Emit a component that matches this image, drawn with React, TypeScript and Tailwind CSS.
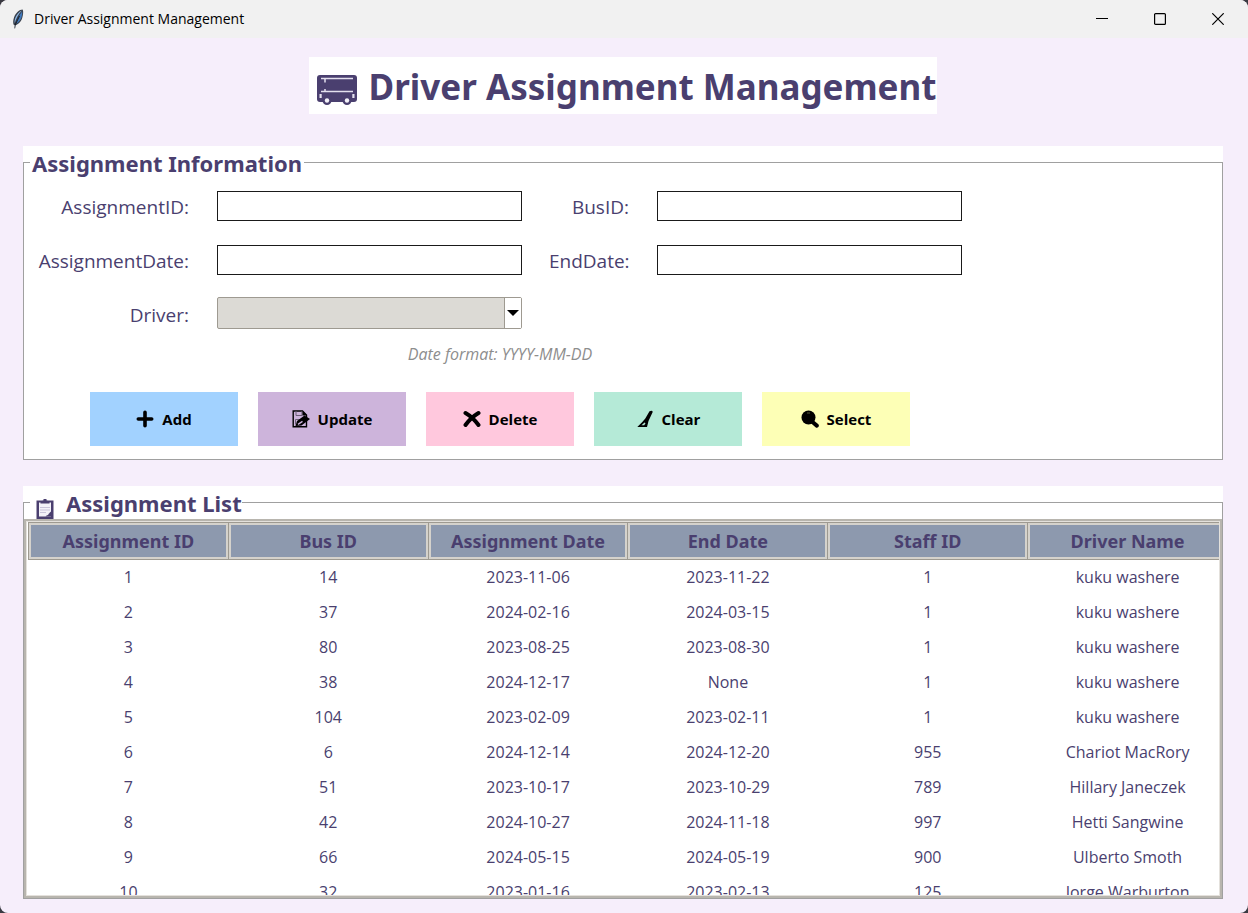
import type { ReactNode } from "react";

type Assignment = {
  id: number;
  bus: number;
  start: string;
  end: string;
  staff: number;
  driver: string;
};

const assignments: Assignment[] = [
  { id: 1, bus: 14, start: "2023-11-06", end: "2023-11-22", staff: 1, driver: "kuku washere" },
  { id: 2, bus: 37, start: "2024-02-16", end: "2024-03-15", staff: 1, driver: "kuku washere" },
  { id: 3, bus: 80, start: "2023-08-25", end: "2023-08-30", staff: 1, driver: "kuku washere" },
  { id: 4, bus: 38, start: "2024-12-17", end: "None", staff: 1, driver: "kuku washere" },
  { id: 5, bus: 104, start: "2023-02-09", end: "2023-02-11", staff: 1, driver: "kuku washere" },
  { id: 6, bus: 6, start: "2024-12-14", end: "2024-12-20", staff: 955, driver: "Chariot MacRory" },
  { id: 7, bus: 51, start: "2023-10-17", end: "2023-10-29", staff: 789, driver: "Hillary Janeczek" },
  { id: 8, bus: 42, start: "2024-10-27", end: "2024-11-18", staff: 997, driver: "Hetti Sangwine" },
  { id: 9, bus: 66, start: "2024-05-15", end: "2024-05-19", staff: 900, driver: "Ulberto Smoth" },
  { id: 10, bus: 32, start: "2023-01-16", end: "2023-02-13", staff: 125, driver: "Jorge Warburton" },
];

const columns = ["Assignment ID", "Bus ID", "Assignment Date", "End Date", "Staff ID", "Driver Name"];

function FeatherIcon() {
  return (
    <svg className="h-5 w-3" viewBox="0 0 12 20" aria-hidden="true">
      <path d="M10.6.6C7.5.6 3.6 4 2 8.400c-1 2.600-1 5-.5 7l1.100.8-.3 3.200.9-.1.6-3C7.500 14.600 9.500 12 10.300 8.800 11.200 5.500 11.600 2.500 10.600.6Z" fill="#39414d" />
      <path d="M9.900 1.600C7 3 4.200 6 3.100 9.500c-.5 1.700-.7 3.300-.4 4.800C4 10 6 5.500 9.900 1.600Z" fill="#8db8e6" />
      <path d="M10.100 2.400C7.400 6 5 10.300 4.200 15 6.700 13 8.700 11 9.400 8.400 10 6.200 10.400 4.200 10.100 2.400Z" fill="#3f79bd" />
      <path d="M7.500 7 3.200 16" stroke="#14181f" strokeWidth=".9" />
    </svg>
  );
}

function BusIcon() {
  return (
    <svg className="h-[30px] w-10" viewBox="0 0 40 30" aria-hidden="true">
      <path d="M3 0h34q3 0 3 3v21q0 3-3 3H3q-3 0-3-3V3q0-3 3-3Z" fill="#4a3f6f" />
      <path d="M4 3.500h32M8 3.500v4M8 14v3M4 16.500h32" fill="none" stroke="#e4e0ee" strokeWidth="1.500" />
      <circle cx="10" cy="25.500" r="4.500" fill="#4a3f6f" />
      <circle cx="30" cy="25.500" r="4.500" fill="#4a3f6f" />
      <circle cx="10" cy="25.500" r="2.200" fill="#f4f2f9" />
      <circle cx="30" cy="25.500" r="2.200" fill="#f4f2f9" />
      <path d="M2.500 19v4h2.200v-4ZM35.300 19v4h2.200v-4Z" fill="#e4e0ee" />
    </svg>
  );
}

function ClipboardIcon() {
  return (
    <svg className="h-5 w-[18px]" viewBox="0 0 18 20" aria-hidden="true">
      <path d="M.5 1.500h17V20H.5Z" fill="#4a3f6f" />
      <path d="M3 3.500h12V17.500H3Z" fill="#f3f1f8" />
      <path d="M4.500 2.500 7.500 1.500V0h3v1.500l3 1v2h-9Z" fill="#4a3f6f" />
      <path d="M4 8.500h10M4 11h10M4 13.500h6" stroke="#c9c4da" strokeWidth="1.200" />
      <path d="M9.500 17.500 15 12.500v5Z" fill="#4a3f6f" />
      <path d="M11 16.500V14.500h2.500Z" fill="#f3f1f8" />
    </svg>
  );
}

function PlusIcon() {
  return (
    <svg className="h-[18px] w-[18px]" viewBox="0 0 18 18" aria-hidden="true">
      <path d="M9 2.300v13.400M2.300 9h13.400" stroke="#000" strokeWidth="3.600" strokeLinecap="round" />
    </svg>
  );
}

function SaveEditIcon() {
  return (
    <svg className="h-[18px] w-[18px]" viewBox="0 0 18 18" aria-hidden="true">
      <path d="M1.200 1h9.300l4 4v11.800H1.200Z" fill="none" stroke="#000" strokeWidth="1.400" />
      <path d="M4 1v4.500h6V1M3.500 14.500v-5H8" fill="none" stroke="#6b5f76" strokeWidth="1" />
      <path d="M10.500 1v4.500h4.500Z" fill="#000" />
      <path d="m3.500 16 1.500-5 7.500-5.500 5.500 3.500-8.500 6.500Z" fill="#000" />
      <path d="m6 14.300 4.500-3" stroke="#cdb4db" strokeWidth="1.400" />
    </svg>
  );
}

function CrossIcon() {
  return (
    <svg className="h-[18px] w-[18px]" viewBox="0 0 18 18" aria-hidden="true">
      <path d="M2.500 3q7 4 13 12M15.500 3Q8 7.500 2.500 15" fill="none" stroke="#000" strokeWidth="4" strokeLinecap="round" />
    </svg>
  );
}

function BrushIcon() {
  return (
    <svg className="h-[18px] w-[18px]" viewBox="0 0 18 18" aria-hidden="true">
      <path d="M13.500 1.300q3-1.300 3.200.8L12.500 11l-1.500 6H1.300l5-5 3-3.500Z" fill="#000" />
      <path d="m5.500 15.300 3-2.800 1 .8-1.300 2Z" fill="#b5ead7" />
    </svg>
  );
}

function MagnifierIcon() {
  return (
    <svg className="h-[18px] w-[18px]" viewBox="0 0 18 18" aria-hidden="true">
      <circle cx="7.500" cy="7.500" r="7" fill="#000" />
      <path d="m11.500 12 4.300 3.600" stroke="#000" strokeWidth="4" strokeLinecap="round" />
      <path d="M6 3h3" stroke="#55563a" strokeWidth="1" />
    </svg>
  );
}

const actions: { label: string; color: string; icon: ReactNode }[] = [
  { label: "Add", color: "bg-[#a2d2ff]", icon: <PlusIcon /> },
  { label: "Update", color: "bg-[#cdb4db]", icon: <SaveEditIcon /> },
  { label: "Delete", color: "bg-[#ffc8dd]", icon: <CrossIcon /> },
  { label: "Clear", color: "bg-[#b5ead7]", icon: <BrushIcon /> },
  { label: "Select", color: "bg-[#fdffb6]", icon: <MagnifierIcon /> },
];

function TitleBar() {
  return (
    <header className="flex h-[38px] shrink-0 items-center bg-[#f1f1f1] pl-3">
      <FeatherIcon />
      <span className="ml-2.5 grow text-sm text-black">Driver Assignment Management</span>
      <div className="flex gap-3 pr-[7px]">
        <button type="button" aria-label="Minimize" className="flex h-[38px] w-[46px] items-center justify-center">
          <svg className="h-3 w-3" viewBox="0 0 12 12">
            <path d="M0 5.500h12" stroke="#000" />
          </svg>
        </button>
        <button type="button" aria-label="Maximize" className="flex h-[38px] w-[46px] items-center justify-center">
          <svg className="h-3 w-3" viewBox="0 0 12 12">
            <rect x=".6" y=".6" width="10.800" height="10.800" rx="1" fill="none" stroke="#000" strokeWidth="1.200" />
          </svg>
        </button>
        <button type="button" aria-label="Close" className="flex h-[38px] w-[46px] items-center justify-center">
          <svg className="h-3 w-3" viewBox="0 0 12 12">
            <path d="m.3.3 11.400 11.400M11.700.3.3 11.700" stroke="#000" strokeWidth="1.200" />
          </svg>
        </button>
      </div>
    </header>
  );
}

function Field({ id, label }: { id: string; label: string }) {
  return (
    <>
      <label htmlFor={id} className="pt-0.5 pr-px text-right text-[19px] leading-7">
        {label}
      </label>
      <input id={id} type="text" className="h-[30px] w-full border border-[#1a1a1a] bg-white px-1 text-base" />
    </>
  );
}

function AssignmentForm() {
  return (
    <section aria-labelledby="form-title" className="shrink-0 bg-white pt-4">
      <div className="border border-[#a0a0a0] pb-[13px]">
        <h2 id="form-title" className="-mt-4 ml-1.5 w-fit bg-white px-0.5 font-['Noto_Sans',sans-serif] text-[22px] leading-8 font-bold">
          Assignment Information
        </h2>
        <form className="mt-3 ml-3.5 w-[924px]">
          <div className="grid grid-cols-[152px_305px_81px_305px] items-center gap-x-[27px] gap-y-6">
            <Field id="assignment-id" label="AssignmentID:" />
            <Field id="bus-id" label="BusID:" />
            <Field id="assignment-date" label="AssignmentDate:" />
            <Field id="end-date" label="EndDate:" />
            <label htmlFor="driver" className="pt-0.5 pr-px text-right text-[19px] leading-7">
              Driver:
            </label>
            <div className="relative -mt-0.5">
              <select
                id="driver"
                className="block h-8 w-full appearance-none rounded-xs border border-[#9e9a91] bg-[#dcdad5] px-1 text-base"
              />
              <span className="pointer-events-none absolute inset-y-px right-px flex w-[17px] items-center justify-center border-l border-[#9e9a91] bg-white">
                <svg className="h-1.5 w-3" viewBox="0 0 12 6" aria-hidden="true">
                  <path d="M0 0h12L6 6Z" fill="#000" />
                </svg>
              </span>
            </div>
          </div>
          <p className="mt-[13px] text-center text-base leading-6 text-[#8d8d8d] italic">Date format: YYYY-MM-DD</p>
          <div className="mt-[26px] flex justify-center gap-5">
            {actions.map((action) => (
              <button
                key={action.label}
                type="button"
                className={`flex h-[54px] w-[148px] items-center justify-center gap-2 text-[15px] font-bold text-black ${action.color}`}
              >
                {action.icon}
                {action.label}
              </button>
            ))}
          </div>
        </form>
      </div>
    </section>
  );
}

function AssignmentList() {
  return (
    <section aria-labelledby="list-title" className="flex min-h-0 grow flex-col bg-white pt-4">
      <div className="flex min-h-0 grow flex-col border border-[#a0a0a0]">
        <h2
          id="list-title"
          className="-mt-4 ml-1.5 flex w-fit shrink-0 items-center gap-3 bg-white pl-1.5 font-['Noto_Sans',sans-serif] text-[22px] leading-8 font-bold"
        >
          <span className="pt-3">
            <ClipboardIcon />
          </span>
          Assignment List
        </h2>
        <div className="min-h-0 grow overflow-hidden border-2 border-[#b8b5ae]">
          <div className="h-full overflow-hidden border border-[#e4e1dc] pl-px">
            <table className="w-full min-w-[1200px] table-fixed border-collapse text-center">
              <thead>
                <tr>
                  {columns.map((name) => (
                    <th
                      key={name}
                      scope="col"
                      className="h-9 border border-[#9e9a91] bg-[#8d99ae] p-0 font-['Noto_Sans',sans-serif] text-lg leading-8 font-bold"
                    >
                      <div className="border-2 border-[#d5d2cc]">{name}</div>
                    </th>
                  ))}
                </tr>
              </thead>
              <tbody>
                {assignments.map((row) => (
                  <tr key={row.id} className="h-[35px] text-base">
                    <td>{row.id}</td>
                    <td>{row.bus}</td>
                    <td>{row.start}</td>
                    <td>{row.end}</td>
                    <td>{row.staff}</td>
                    <td>{row.driver}</td>
                  </tr>
                ))}
              </tbody>
            </table>
          </div>
        </div>
      </div>
    </section>
  );
}

export default function App() {
  return (
    <div className="h-screen bg-[#3a3a42] font-['Open_Sans',sans-serif] text-[#4a3f6f]">
      <div className="flex h-full flex-col overflow-hidden rounded-lg bg-[#f6eefb]">
        <TitleBar />
        <main className="flex min-h-0 grow flex-col pt-[19px] pr-[25px] pb-3.5 pl-[23px]">
          <h1 className="mx-auto flex h-[57px] items-center gap-3 bg-white pr-px pl-2 font-['Noto_Sans',sans-serif] text-[35px] leading-[56px] font-bold">
            <span className="pt-2">
              <BusIcon />
            </span>
            <span className="pt-0.5">Driver Assignment Management</span>
          </h1>
          <div className="mt-8 flex min-h-0 grow flex-col gap-[26px]">
            <AssignmentForm />
            <AssignmentList />
          </div>
        </main>
      </div>
    </div>
  );
}
